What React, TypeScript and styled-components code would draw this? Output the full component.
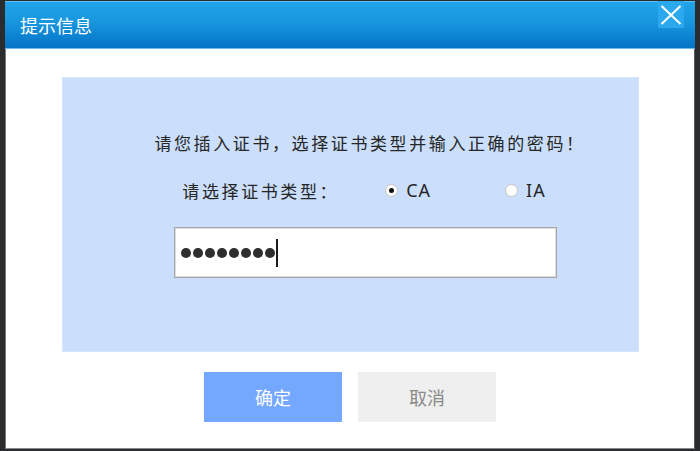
import React from "react";
import styled, { createGlobalStyle } from "styled-components";

const Global = createGlobalStyle`
  html, body {
    margin: 0;
    padding: 0;
    background: #2b2c2e;
    width: 700px;
    height: 451px;
    overflow: hidden;
  }
  * { box-sizing: border-box; }
`;

const CJK = `"Noto Sans CJK SC", "Noto Sans", sans-serif`;

const Dialog = styled.div`
  margin: 1px 0 0 5px;
  width: 690px;
  height: 448px;
  background: #ffffff;
  border-left: 1px solid #7a7a7a;
  border-right: 1px solid #5a5a5a;
  border-bottom: 1px solid #8a8a8a;
  display: flex;
  flex-direction: column;
`;

const Header = styled.div`
  height: 48px;
  margin: 0 -1px;
  display: flex;
  justify-content: space-between;
  align-items: flex-start;
  background: linear-gradient(to bottom, #21a4e9 0%, #1796de 45%, #0473c6 100%);
  border-top: 1px solid #62c0f2;
  border-bottom: 1px solid #6db8ee;
`;

const Title = styled.div`
  font-family: ${CJK};
  font-size: 18px;
  line-height: 46px;
  color: #ffffff;
  padding-left: 15px;
`;

const CloseButton = styled.button`
  width: 26px;
  height: 27px;
  margin-right: 11px;
  margin-top: -1px;
  padding: 0;
  border: none;
  background: #2aa9ee;
  display: flex;
  align-items: center;
  justify-content: center;
  cursor: pointer;
`;

const Body = styled.div`
  flex: 1;
  display: flex;
  flex-direction: column;
  align-items: center;
  padding-top: 28px;
`;

const Panel = styled.div`
  width: 577px;
  height: 275px;
  background: #cbdffc;
  border: 1px solid #d6e6fd;
  display: flex;
  flex-direction: column;
  align-items: center;
  padding-top: 52px;
  padding-left: 28px;
`;

const Message = styled.div`
  font-family: ${CJK};
  font-size: 17px;
  letter-spacing: 2.6px;
  line-height: 26px;
  color: #262626;
  white-space: nowrap;
  margin-left: 12px;
`;

const TypeRow = styled.div`
  margin-top: 21px;
  display: flex;
  align-items: center;
  height: 26px;
`;

const Label = styled.span`
  font-family: ${CJK};
  font-size: 17px;
  letter-spacing: 2.6px;
  color: #262626;
  white-space: nowrap;
`;

const RadioOption = styled.label<{ $gap: number }>`
  display: flex;
  align-items: center;
  margin-left: ${(p) => p.$gap}px;
  cursor: pointer;
`;

const RadioCircle = styled.span<{ $checked: boolean }>`
  width: 13px;
  height: 13px;
  border-radius: 50%;
  background: #ffffff;
  border: 1px solid #c4c4c4;
  display: flex;
  align-items: center;
  justify-content: center;
  &::after {
    content: "";
    width: 5px;
    height: 5px;
    border-radius: 50%;
    background: ${(p) => (p.$checked ? "#111111" : "transparent")};
  }
`;

const RadioText = styled.span`
  margin-left: 8px;
  font-family: "Noto Sans", "Open Sans", sans-serif;
  font-size: 18px;
  letter-spacing: 1px;
  color: #262626;
`;

const PasswordBox = styled.div`
  margin-top: 24px;
  width: 383px;
  height: 51px;
  background: #ffffff;
  border: 1px solid #a6a6a6;
  box-shadow: inset 0 0 0 1px #dcdcdc;
  display: flex;
  align-items: center;
  padding-left: 6px;
  margin-left: 2px;
`;

const Dot = styled.span`
  width: 10px;
  height: 10px;
  border-radius: 50%;
  background: #2e2e2e;
  margin-right: 2px;
`;

const Caret = styled.span`
  width: 2px;
  height: 28px;
  background: #1a1a1a;
  margin-left: -1px;
`;

const Actions = styled.div`
  margin-top: 20px;
  display: flex;
  gap: 16px;
`;

const Button = styled.button<{ $primary?: boolean }>`
  width: 138px;
  height: 50px;
  border: none;
  padding: 0;
  font-family: ${CJK};
  font-size: 18px;
  background: ${(p) => (p.$primary ? "#74a8ff" : "#efefef")};
  color: ${(p) => (p.$primary ? "#ffffff" : "#8a8a8a")};
  cursor: pointer;
`;

export default function App() {
  const [type, setType] = React.useState<"CA" | "IA">("CA");
  const dots = Array.from({ length: 8 });
  return (
    <>
      <Global />
      <Dialog>
        <Header>
          <Title>提示信息</Title>
          <CloseButton aria-label="关闭">
            <svg width="22" height="20" viewBox="0 0 22 20">
              <line x1="1.5" y1="1" x2="20.5" y2="19" stroke="#ffffff" strokeWidth="2" />
              <line x1="20.5" y1="1" x2="1.5" y2="19" stroke="#ffffff" strokeWidth="2" />
            </svg>
          </CloseButton>
        </Header>
        <Body>
          <Panel>
            <Message>请您插入证书，选择证书类型并输入正确的密码！</Message>
            <TypeRow>
              <Label>请选择证书类型：</Label>
              <RadioOption $gap={46} onClick={() => setType("CA")}>
                <RadioCircle $checked={type === "CA"} />
                <RadioText>CA</RadioText>
              </RadioOption>
              <RadioOption $gap={74} onClick={() => setType("IA")}>
                <RadioCircle $checked={type === "IA"} />
                <RadioText>IA</RadioText>
              </RadioOption>
            </TypeRow>
            <PasswordBox>
              {dots.map((_, i) => (
                <Dot key={i} />
              ))}
              <Caret />
            </PasswordBox>
          </Panel>
          <Actions>
            <Button $primary>确定</Button>
            <Button>取消</Button>
          </Actions>
        </Body>
      </Dialog>
    </>
  );
}
